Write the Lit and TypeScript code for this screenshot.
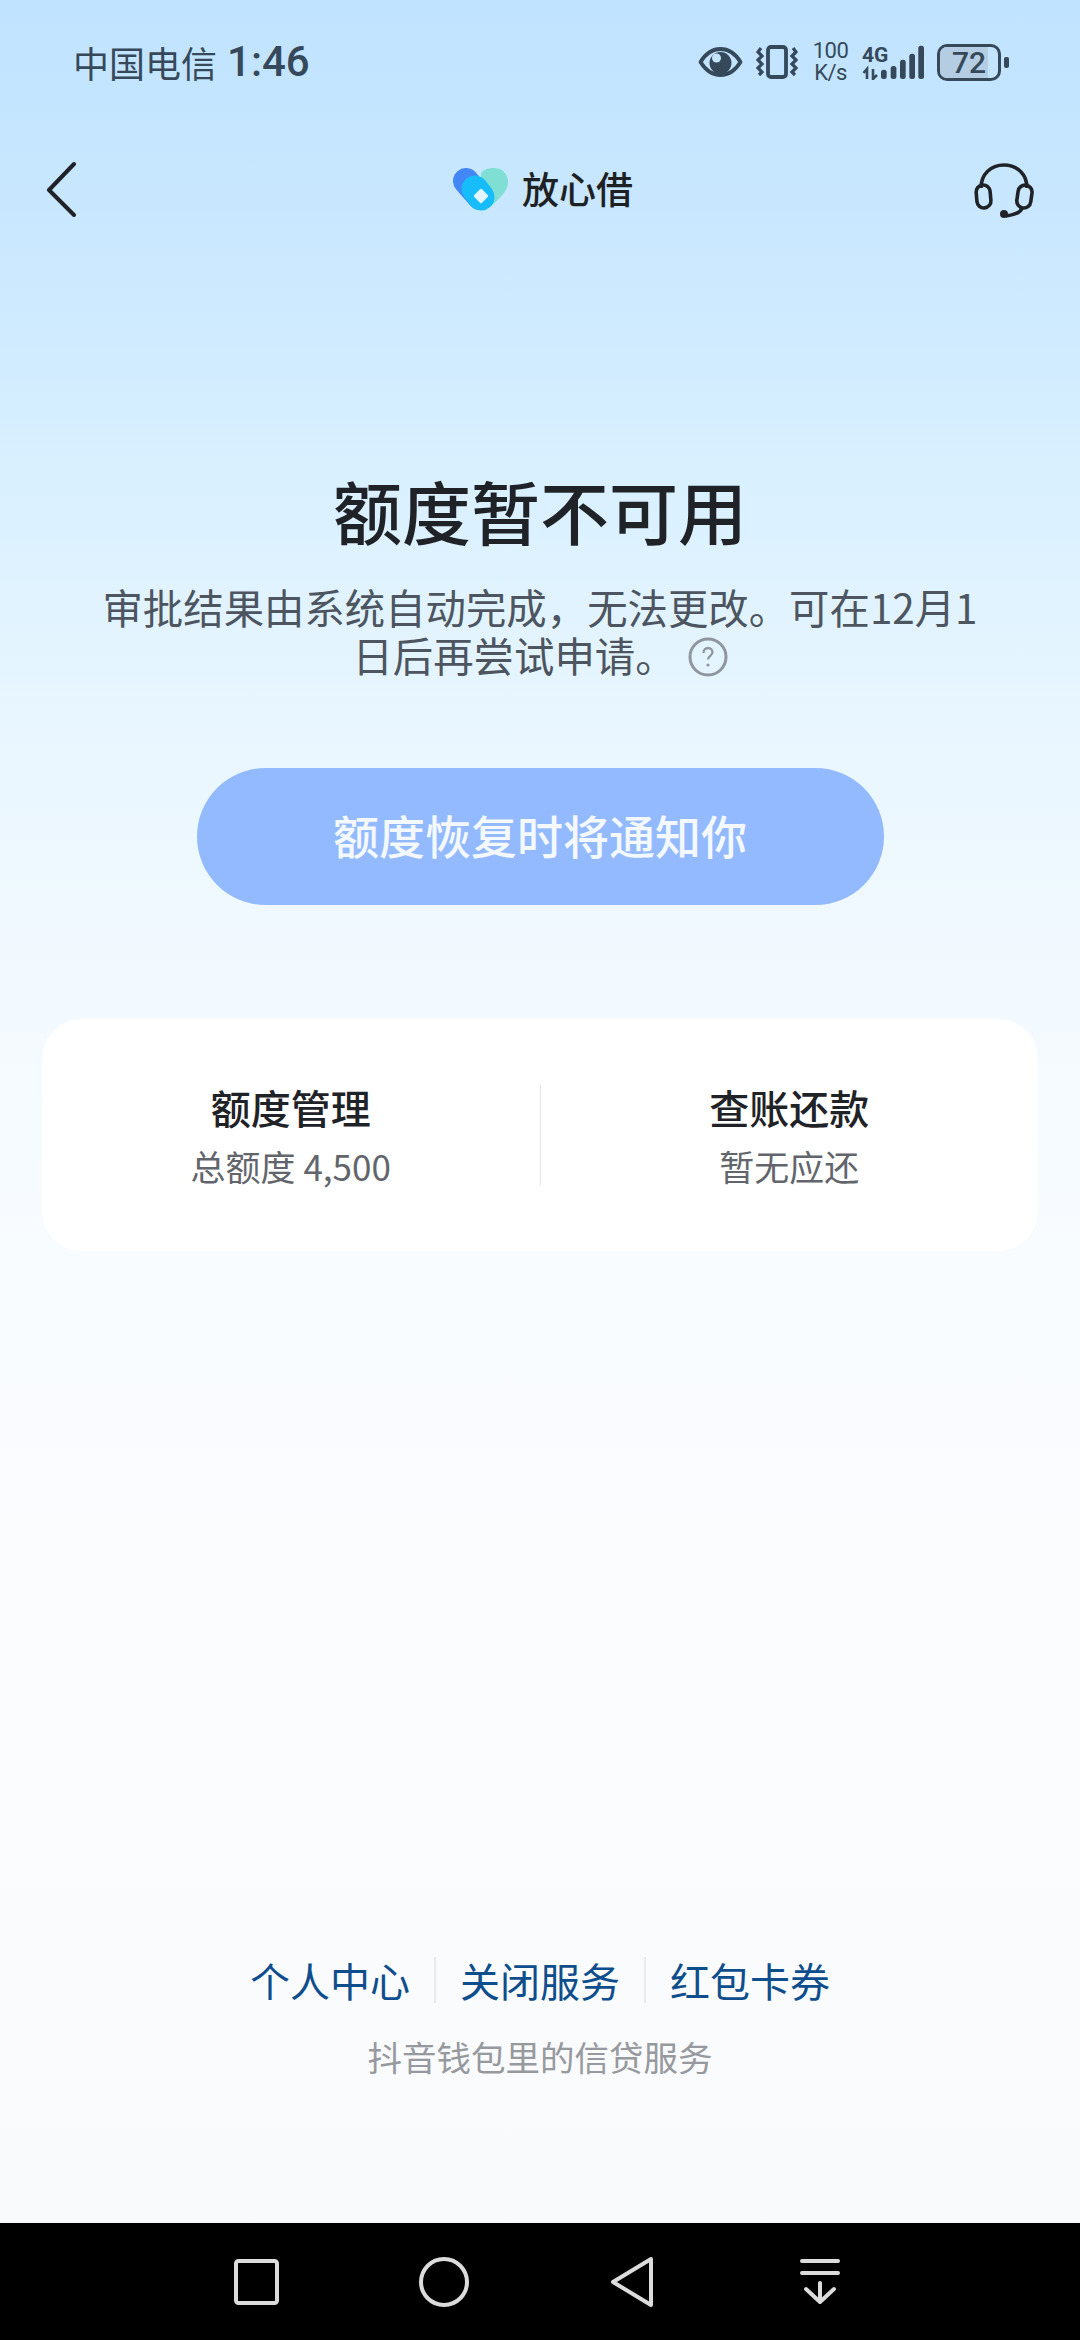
import { LitElement, html, css } from "lit";
import { customElement } from "lit/decorators.js";

@customElement("app-root")
export class AppRoot extends LitElement {
  static styles = css`
    :host {
      display: block;
      width: 1080px;
      height: 2340px;
      font-family: "Noto Sans CJK SC", "Noto Sans", sans-serif;
    }
    .page {
      width: 1080px;
      height: 2340px;
      display: flex;
      flex-direction: column;
      overflow: hidden;
      background: linear-gradient(180deg, #c0e3ff 0, #cae8ff 240px, #d9f0ff 480px, #e8f6ff 720px, #f3faff 1000px, #f9fcff 1300px, #fbfcfd 1800px, #f9fafb 2223px);
    }
    .status {
      height: 124px;
      flex: none;
      display: flex;
      align-items: center;
      justify-content: space-between;
      padding: 0 71px 0 73px;
      color: #35495a;
    }
    .status-left {
      font-size: 36px;
      font-weight: 400;
      line-height: 48px;
      display: flex;
      align-items: center;
      gap: 10px;
    }
    .clock {
      font-family: "Roboto", sans-serif;
      font-weight: 500;
      font-size: 42px;
    }
    .status-right {
      display: flex;
      align-items: center;
    }
    .status-right svg { display: block; }
    .eye { margin-right: 13px; }
    .vib { margin-right: 15px; }
    .speed {
      width: 35px;
      font-family: "Roboto", sans-serif;
      font-size: 22px;
      letter-spacing: -0.5px;
      line-height: 22px;
      margin-right: 14px;
      white-space: nowrap;
    }
    .speed div { display: flex; justify-content: center; }
    .signal { margin-right: 13px; }
    .signal text {
      font-family: "Roboto", sans-serif;
      font-weight: 700;
      font-size: 21px;
      fill: #35495a;
    }
    .battery {
      position: relative;
      width: 58px;
      height: 31px;
      border: 3px solid #35495a;
      border-radius: 10px;
      overflow: hidden;
      display: flex;
      align-items: center;
      justify-content: center;
      font-family: "Roboto", sans-serif;
      font-weight: 500;
      font-size: 30px;
      color: #35495a;
      flex: none;
    }
    .battery-fill {
      position: absolute;
      inset: 0 10px 0 0;
      background: #b4cde2;
    }
    .battery span { position: relative; }
    .tip {
      width: 5px;
      height: 11px;
      margin-left: 3px;
      border-radius: 2px;
      background: #35495a;
    }
    .header {
      height: 130px;
      flex: none;
      display: grid;
      grid-template-columns: 1fr auto 1fr;
      align-items: center;
      padding: 0 46px;
    }
    .header svg { display: block; }
    .brand {
      display: flex;
      align-items: center;
      gap: 14px;
      padding-left: 6px;
      font-size: 37px;
      font-weight: 500;
      color: #1d2124;
      line-height: 44px;
    }
    .brand span { margin-top: -2px; }
    .right { justify-self: end; margin-top: 3px; }
    h1 {
      margin: 218px 0 0;
      text-align: center;
      font-size: 69px;
      line-height: 76px;
      font-weight: 500;
      color: #1f2327;
    }
    .desc {
      margin: 35px 0 0;
      padding: 0 100px;
      text-align: center;
      font-size: 40.4px;
      line-height: 48px;
      color: #4c5560;
    }
    .help {
      display: inline-flex;
      vertical-align: -5px;
      margin-left: 12px;
    }
    .cta {
      margin: 89px auto 0;
      width: 687px;
      height: 137px;
      box-sizing: border-box;
      padding-bottom: 5px;
      border-radius: 69px;
      background: #93baff;
      color: #f4f8ff;
      display: flex;
      align-items: center;
      justify-content: center;
      font-size: 46px;
      font-weight: 500;
      flex: none;
    }
    .card {
      margin: 114px 42px 0;
      height: 232px;
      flex: none;
      border-radius: 40px;
      background: #fff;
      display: flex;
      align-items: center;
    }
    .cell {
      flex: 1;
      text-align: center;
    }
    .cell-title {
      font-size: 40px;
      line-height: 50px;
      font-weight: 500;
      color: #1f2327;
    }
    .cell-sub {
      margin-top: 12px;
      font-size: 35px;
      line-height: 44px;
      color: #62666c;
    }
    .vline {
      width: 1px;
      height: 100px;
      background: #e2e4e6;
      flex: none;
    }
    .spacer { flex: 1; }
    .links {
      display: flex;
      justify-content: center;
      align-items: center;
      color: #0f4e8c;
      font-size: 40px;
      line-height: 50px;
    }
    .links i {
      width: 2px;
      height: 46px;
      background: #e8eaec;
      margin: 0 24px;
    }
    .foot {
      margin: 29px 0 145px;
      text-align: center;
      font-size: 34.5px;
      line-height: 44px;
      color: #96999e;
    }
    .nav {
      height: 117px;
      flex: none;
      background: #000;
      display: grid;
      grid-template-columns: repeat(4, 188px);
      padding-left: 162px;
      box-sizing: border-box;
      align-items: center;
      justify-items: center;
    }
    .nav svg { display: block; }
  `;

  render() {
    return html`<div class="page">
      <div class="status">
        <div class="status-left"><span>中国电信</span><span class="clock">1:46</span></div>
        <div class="status-right">
          <svg class="eye" width="45" height="32" viewBox="0 0 45 32">
            <path d="M2.500 16C8 7 15 3 22.500 3S37 7 42.500 16C37 25 30 29 22.500 29S8 25 2.500 16Z" fill="none" stroke="#35495a" stroke-width="3.800" stroke-linejoin="round"/>
            <circle cx="22.500" cy="17" r="11" fill="#35495a"/>
            <circle cx="18.500" cy="12" r="4.500" fill="#c4e4ff"/>
          </svg>
          <svg class="vib" width="42" height="34" viewBox="0 0 42 34" fill="none" stroke="#35495a">
            <rect x="12" y="2" width="18" height="30" rx="3" stroke-width="3.800"/>
            <path d="M5 3 2 7l4 4-4 4 4 4-4 4 4 4-3 3M37 3l3 4-4 4 4 4-4 4 4 4-4 4 3 3" stroke-width="3.200"/>
          </svg>
          <div class="speed"><div>100</div><div>K/s</div></div>
          <svg class="signal" width="62" height="36" viewBox="0 0 62 36">
            <text x="0" y="18">4G</text>
            <path d="M5 35V25L1.500 29M11 25V35L15 31" fill="none" stroke="#35495a" stroke-width="2.600"/>
            <rect x="19" y="25.700" width="5.700" height="9.300" rx="2.500" fill="#35495a"/>
            <rect x="28.700" y="22" width="5.700" height="13" rx="2.500" fill="#35495a"/>
            <rect x="38" y="15.700" width="5.700" height="19.300" rx="2.500" fill="#35495a"/>
            <rect x="47.300" y="9.700" width="5.700" height="25.300" rx="2.500" fill="#35495a"/>
            <rect x="56.300" y="1.700" width="5.700" height="33.300" rx="2.500" fill="#35495a"/>
          </svg>
          <div class="battery"><div class="battery-fill"></div><span>72</span></div>
          <div class="tip"></div>
        </div>
      </div>

      <div class="header">
        <svg width="32" height="56" viewBox="0 0 32 56" fill="none">
          <path d="M28 3 3 29 28 54" stroke="#1f2327" stroke-width="4" stroke-linecap="round" stroke-linejoin="round"/>
        </svg>
        <div class="brand">
          <svg width="55" height="43" viewBox="0 0 55 43">
            <path d="M28 5C31 1 36 0 41 0c8 0 14 6 14 14 0 11-14 22-24 29Z" fill="#7fdfd4"/>
            <path d="M13 13 27 29" fill="none" stroke="#4287f5" stroke-width="26" stroke-linecap="round"/>
            <path d="M22 21 28 29" fill="none" stroke="#17bcfa" stroke-width="27" stroke-linecap="round"/>
            <rect x="22.500" y="22.500" width="11" height="11" rx="1.500" transform="rotate(45 28 28)" fill="#e2f6ff"/>
          </svg>
          <span>放心借</span>
        </div>
        <svg class="right" width="60" height="56" viewBox="0 0 60 56" fill="none" stroke="#1f2327">
          <path d="M7 25C7 11 17 2 30 2s23 9 23 23" stroke-width="3.600"/>
          <rect x="2.500" y="22" width="14" height="23" rx="7" stroke-width="3.600" transform="rotate(-5 9 33)"/>
          <rect x="43.500" y="22" width="14" height="23" rx="7" stroke-width="3.600" transform="rotate(8 50 33)"/>
          <path d="M48 45c-1 4-8 7-16 8" stroke-width="3.400"/>
          <circle cx="30" cy="51" r="4" fill="#1f2327" stroke="none"/>
        </svg>
      </div>

      <h1>额度暂不可用</h1>
      <p class="desc">审批结果由系统自动完成，无法更改。可在12月1日后再尝试申请。<span class="help">
          <svg width="40" height="40" viewBox="0 0 40 40">
            <circle cx="20" cy="20" r="18" fill="none" stroke="#8f969e" stroke-width="3"/>
            <path d="M15.500 16c0-3 2-5 4.600-5s4.400 2 4.400 4.300c0 3.400-4.500 3.700-4.500 7.200" fill="none" stroke="#8f969e" stroke-width="2.300"/>
            <circle cx="20" cy="28" r="1.600" fill="#8f969e"/>
          </svg>
        </span></p>

      <div class="cta">额度恢复时将通知你</div>

      <div class="card">
        <div class="cell">
          <div class="cell-title">额度管理</div>
          <div class="cell-sub">总额度 4,500</div>
        </div>
        <div class="vline"></div>
        <div class="cell">
          <div class="cell-title">查账还款</div>
          <div class="cell-sub">暂无应还</div>
        </div>
      </div>

      <div class="spacer"></div>

      <div class="links">
        <span>个人中心</span><i></i><span>关闭服务</span><i></i><span>红包卡券</span>
      </div>
      <div class="foot">抖音钱包里的信贷服务</div>

      <div class="nav">
        <svg width="45" height="46" viewBox="0 0 45 46"><rect x="2" y="2" width="41" height="42" rx="2.500" fill="none" stroke="#dcdcdc" stroke-width="4"/></svg>
        <svg width="50" height="50" viewBox="0 0 50 50"><circle cx="25" cy="25" r="23" fill="none" stroke="#dcdcdc" stroke-width="4"/></svg>
        <svg width="44" height="52" viewBox="0 0 44 52"><path d="M41 3 3 26l38 23Z" fill="none" stroke="#dcdcdc" stroke-width="4" stroke-linejoin="round"/></svg>
        <svg width="42" height="47" viewBox="0 0 42 47" fill="none" stroke="#dcdcdc" stroke-width="4" stroke-linecap="round" stroke-linejoin="round"><path d="M3 3h36M3 15h36M21 25v19M7 31l14 13 14-13"/></svg>
      </div>
    </div>`;
  }
}
